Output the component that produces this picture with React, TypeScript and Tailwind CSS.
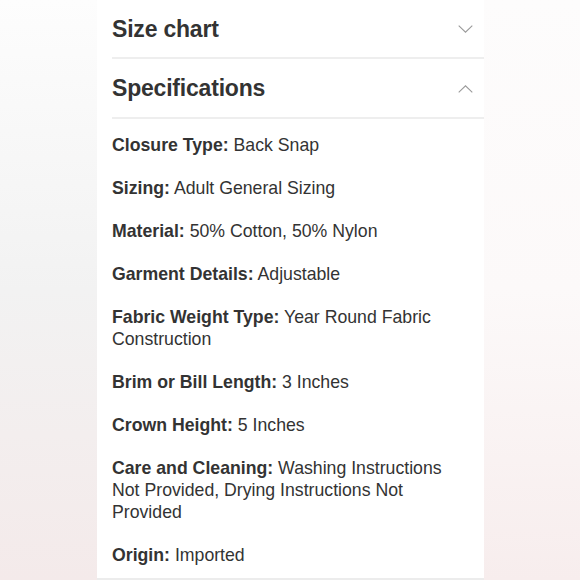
import React from "react";

const items: { label: string; value: string }[] = [
  { label: "Closure Type:", value: "Back Snap" },
  { label: "Sizing:", value: "Adult General Sizing" },
  { label: "Material:", value: "50% Cotton, 50% Nylon" },
  { label: "Garment Details:", value: "Adjustable" },
  { label: "Fabric Weight Type:", value: "Year Round Fabric Construction" },
  { label: "Brim or Bill Length:", value: "3 Inches" },
  { label: "Crown Height:", value: "5 Inches" },
  { label: "Care and Cleaning:", value: "Washing Instructions Not Provided, Drying Instructions Not Provided" },
  { label: "Origin:", value: "Imported" },
];

function Chevron({ up }: { up?: boolean }) {
  return (
    <svg width="15" height="8" viewBox="0 0 15 8" fill="none" className="block">
      {up ? (
        <path d="M0.7 7.3 L7.5 0.8 L14.3 7.3" stroke="#9a9a9a" strokeWidth="1.1" />
      ) : (
        <path d="M0.7 0.7 L7.5 7.2 L14.3 0.7" stroke="#9a9a9a" strokeWidth="1.1" />
      )}
    </svg>
  );
}

export default function App() {
  return (
    <div
      className="flex w-[580px] h-[580px] overflow-hidden text-[#333333]"
      style={{ fontFamily: '"Liberation Sans", Arial, Helvetica, sans-serif' }}
    >
      <div className="w-[97px] h-full bg-gradient-to-b from-[#fdfdfd] via-[#f2f2f2] to-[#f4eaea]" />
      <div className="w-[387px] h-full bg-white flex flex-col border-b-2 border-[#ececec]">
        <div className="ml-[15px] h-[58px] mt-[1px] flex items-center justify-between pr-[11px] border-b-2 border-[#eeeeee]">
          <span className="text-[23px] font-bold tracking-[-0.2px]">Size chart</span>
          <Chevron />
        </div>
        <div className="ml-[15px] h-[60px] pt-[1px] flex items-center justify-between pr-[11px] border-b-2 border-[#eeeeee]">
          <span className="text-[23px] font-bold tracking-[-0.2px]">Specifications</span>
          <Chevron up />
        </div>
        <div className="pl-[15px] pr-[20px] pt-[15px] flex flex-col gap-[21px]">
          {items.map((it) => (
            <p key={it.label} className="text-[17.7px] leading-[22px]">
              <span className="font-bold">{it.label}</span> {it.value}
            </p>
          ))}
        </div>
      </div>
      <div className="flex-1 h-full bg-gradient-to-b from-[#fdfcfc] via-[#fcf9f9] to-[#f7eded]" />
    </div>
  );
}
